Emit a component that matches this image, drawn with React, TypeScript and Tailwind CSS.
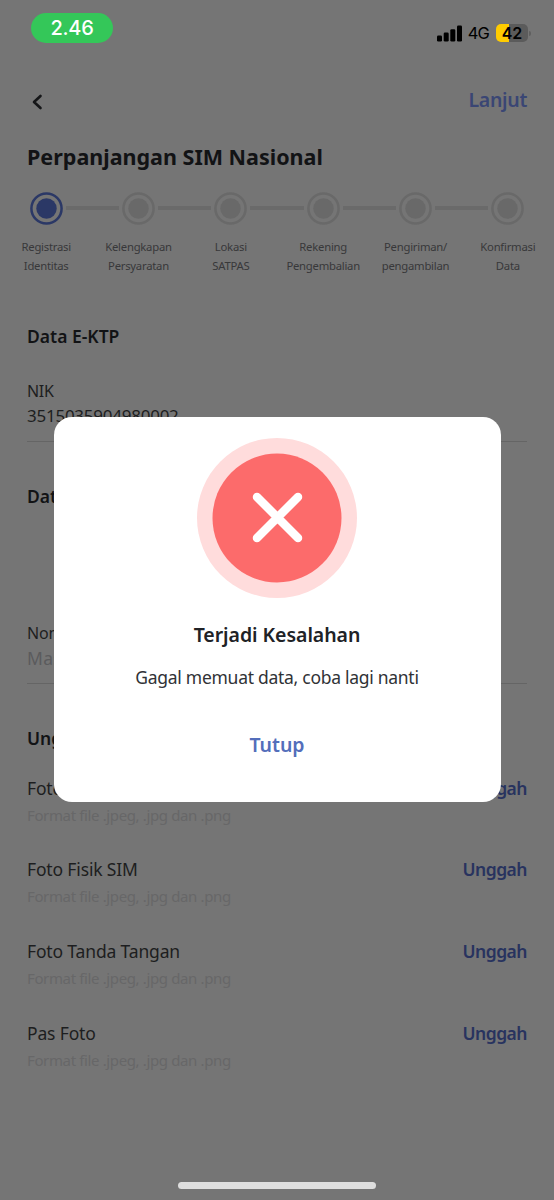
import React from 'react';

interface Step {
  lines: [string, string];
}

const steps: Step[] = [
  { lines: ['Registrasi', 'Identitas'] },
  { lines: ['Kelengkapan', 'Persyaratan'] },
  { lines: ['Lokasi', 'SATPAS'] },
  { lines: ['Rekening', 'Pengembalian'] },
  { lines: ['Pengiriman/', 'pengambilan'] },
  { lines: ['Konfirmasi', 'Data'] },
];

const uploads = ['Foto E-KTP', 'Foto Fisik SIM', 'Foto Tanda Tangan', 'Pas Foto'];

const StatusBar: React.FC = () => (
  <div className="flex h-[60px] items-start justify-between pl-[31px] pr-[23px] font-['Inter',sans-serif]">
    <div className="mt-[13px] flex h-[30px] w-[82px] items-center justify-center rounded-full bg-[#34c759] text-[20px] font-medium leading-none tracking-[-0.3px] text-white">
      2.46
    </div>
    <div className="mt-[24px] flex h-[18px] items-center text-black">
      <svg className="mr-[6px] h-[17px] w-[25px]" viewBox="0 0 25 17" fill="currentColor">
        <rect x="0" y="10.500" width="5" height="6" rx="1.3" />
        <rect x="6.7" y="7.500" width="5" height="9" rx="1.3" />
        <rect x="13.3" y="4.200" width="5" height="12.300" rx="1.3" />
        <rect x="20" y="0.500" width="5" height="16" rx="1.3" />
      </svg>
      <span className="mr-[7px] text-[16.5px] leading-[20px] tracking-[-0.8px]">4G</span>
      <div className="flex h-[18px] w-[32px] items-center justify-center rounded-[5px] bg-[linear-gradient(90deg,#ffcc00_42%,#5b5b5b_42%)] text-[16px] font-semibold leading-none">
        42
      </div>
      <span className="ml-[1px] h-[5px] w-[2px] rounded-r-full bg-[#5f5f5f]" />
    </div>
  </div>
);

const Stepper: React.FC = () => (
  <div className="grid grid-cols-6">
    {steps.map((step, i) => (
      <div key={step.lines[0]} className="flex flex-col items-center">
        <div className="flex w-full items-center">
          <span className={`mr-[3px] h-[3.5px] flex-1 ${i === 0 ? 'bg-transparent' : 'bg-[#6a6a6a]'}`} />
          <svg
            className={`h-[33px] w-[33px] ${i === 0 ? 'text-[#2b3866]' : 'text-[#696969]'}`}
            viewBox="0 0 33 33"
          >
            <circle cx="16.5" cy="16.5" r="15.1" fill="none" stroke="currentColor" strokeWidth="2.5" />
            <circle cx="16.5" cy="16.5" r="10.2" fill="currentColor" />
          </svg>
          <span className={`ml-[3px] h-[3.5px] flex-1 ${i === steps.length - 1 ? 'bg-transparent' : 'bg-[#6a6a6a]'}`} />
        </div>
        <div className="mt-[12px] whitespace-nowrap text-center text-[11.3px] leading-[19px] tracking-[-0.25px] text-[#38383a]">
          <div>{step.lines[0]}</div>
          <div>{step.lines[1]}</div>
        </div>
      </div>
    ))}
  </div>
);

const SectionTitle: React.FC<{ children: React.ReactNode }> = ({ children }) => (
  <h2 className="text-[17.5px] font-semibold leading-[24px] text-[#121315]">{children}</h2>
);

const ErrorDialog: React.FC = () => (
  <div className="absolute left-[53.5px] top-[416.5px] flex h-[385px] w-[447px] flex-col items-center rounded-[18px] bg-white pt-[21.5px]">
    <svg className="h-[160px] w-[160px]" viewBox="0 0 160 160">
      <circle cx="80" cy="80" r="80" fill="#ffdcdc" />
      <circle cx="80" cy="80" r="64.5" fill="#fc6b6b" />
      <path d="M60 59l41 41m0-41l-41 41" fill="none" stroke="#fff" strokeWidth="8.500" strokeLinecap="round" />
    </svg>
    <h3 className="mt-[23px] text-[19.5px] font-semibold leading-[28px] tracking-[-0.05px] text-[#202226]">
      Terjadi Kesalahan
    </h3>
    <p className="mt-[15px] text-[17.5px] leading-[26px] tracking-[-0.28px] text-[#303236]">
      Gagal memuat data, coba lagi nanti
    </p>
    <button className="mt-[40.5px] text-[19.5px] font-semibold leading-[28px] text-[#536ebb]">Tutup</button>
  </div>
);

const App: React.FC = () => {
  return (
    <div className="relative flex h-[1200px] w-[554px] flex-col overflow-hidden bg-[#757575] font-['Noto_Sans',sans-serif]">
      <StatusBar />

      <div className="flex h-[80px] items-center justify-between pl-[31px] pr-[27px]">
        <svg className="mt-[3px] h-[16px] w-[12px]" viewBox="0 0 12 16" fill="none" stroke="#151618" strokeWidth="2.6" strokeLinecap="round" strokeLinejoin="round">
          <path d="M9.500 2L3 8l6.500 6" />
        </svg>
        <span className="text-[19.5px] font-semibold leading-[28px] tracking-[-0.3px] text-[#3a4674]">Lanjut</span>
      </div>

      <h1 className="mt-[2px] pl-[27px] text-[21.5px] font-bold leading-[30px] text-[#121315]">Perpanjangan SIM Nasional</h1>

      <div className="mt-[19.5px]">
        <Stepper />
      </div>

      <div className="mt-[49.5px] flex flex-col px-[27px]">
        <SectionTitle>Data E-KTP</SectionTitle>
        <div className="mt-[31px] border-b border-[#656565] pb-[13px]">
          <div className="text-[16px] leading-[24px] tracking-[-0.3px] text-[#1d1e20]">NIK</div>
          <div className="mt-[1px] text-[17px] leading-[24px] tracking-[-0.25px] text-[#1d1e20]">3515035904980002</div>
        </div>

        <div className="mt-[42px]">
          <SectionTitle>Data SIM</SectionTitle>
        </div>
        <div className="mt-[113px] border-b border-[#656565] pb-[13px]">
          <div className="text-[16px] leading-[24px] tracking-[-0.2px] text-[#1d1e20]">Nomor SIM</div>
          <div className="mt-[1px] text-[17.5px] leading-[24px] tracking-[0.3px] text-[#5b5b5d]">Masukkan</div>
        </div>

        <div className="mt-[42px]">
          <SectionTitle>Unggah Dokumen</SectionTitle>
        </div>
        <div className="mt-[24.5px] flex flex-col">
          {uploads.map((label) => (
            <div key={label} className="h-[81.7px]">
              <div className="flex justify-between text-[17.5px] leading-[26px]">
                <span className="tracking-[-0.15px] text-[#1d1e20]">{label}</span>
                <span className="font-semibold tracking-[-0.5px] text-[#28335f]">Unggah</span>
              </div>
              <div className="mt-[2px] text-[15px] leading-[24px] tracking-[-0.37px] text-[#676768]">
                Format file .jpeg, .jpg dan .png
              </div>
            </div>
          ))}
        </div>
      </div>

      <ErrorDialog />

      <div className="absolute bottom-[11px] left-[178px] h-[7px] w-[198px] rounded-full bg-[#dedede]" />
    </div>
  );
};

export default App;
